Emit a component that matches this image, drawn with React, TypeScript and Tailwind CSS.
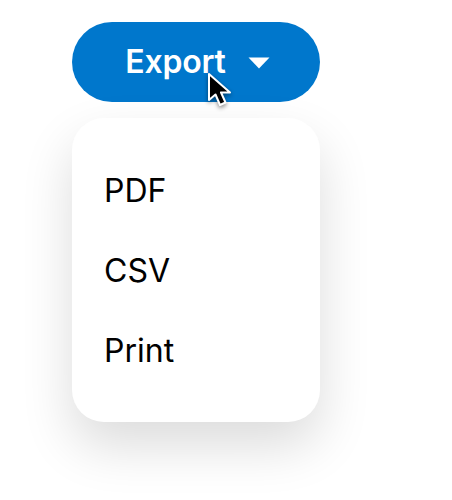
import React from 'react';

const items = ['PDF', 'CSV', 'Print'];

const App = () => {
  return (
    <div className="min-h-[500px] w-[452px] overflow-hidden bg-white pl-[72px] pt-[22px] [font-family:Inter,sans-serif]">
      <div className="relative w-[248px]">
        <button className="flex h-20 w-full items-center justify-center gap-[22px] rounded-[40px] bg-[#0077cc] pl-[3px] text-[32px] font-semibold tracking-[-0.2px] text-white">
          <span>Export</span>
          <svg width="22" height="12" viewBox="0 0 22 12" className="mt-0.5">
            <path d="M0.5 0.5H21.5L11 11.5Z" fill="#fff" />
          </svg>
        </button>

        {/* cursor */}
        <svg width="28" height="38" viewBox="0 0 28 38" className="absolute left-[135px] top-[50px] drop-shadow-[0_2px_2px_rgba(0,0,0,0.45)]">
          <path
            d="M2 2V28L8.5 22.5L13 33L18.5 30.5L14 20.5H23Z"
            fill="#000"
            stroke="#fff"
            strokeWidth="2"
            strokeLinejoin="round"
          />
        </svg>

        <ul className="mt-4 rounded-[32px] bg-white py-8 shadow-[0_24px_52px_rgba(0,0,0,0.14)]">
          {items.map((item) => (
            <li key={item} className="flex h-20 items-center px-8 pt-px text-[32px] text-black">
              {item}
            </li>
          ))}
        </ul>
      </div>
    </div>
  );
};

export default App;
